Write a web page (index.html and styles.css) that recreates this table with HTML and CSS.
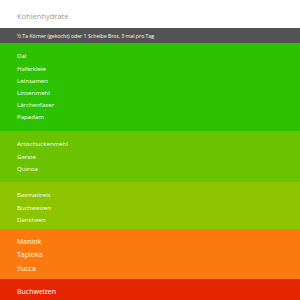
FILE: index.html
```html
<!DOCTYPE html>
<html lang="de">
<head>
<meta charset="utf-8">
<link rel="stylesheet" href="styles.css">
</head>
<body>
<header class="title">Kohlenhydrate</header>
<div class="note">½ Ta Körner (gekocht) oder 1 Scheibe Brot, 3 mal pro Tag</div>
<ul class="group g1">
  <li>Dal</li>
  <li>Haferkleie</li>
  <li>Leinsamen</li>
  <li>Linsenmehl</li>
  <li>Lärchenfaser</li>
  <li>Papadam</li>
</ul>
<ul class="group g2">
  <li>Artischuckenmehl</li>
  <li>Gerste</li>
  <li>Quinoa</li>
</ul>
<ul class="group g3">
  <li>Basmatireis</li>
  <li>Buchweizen</li>
  <li>Dansheen</li>
</ul>
<ul class="group g4">
  <li>Maniok</li>
  <li>Tapioka</li>
  <li>Yucca</li>
</ul>
<ul class="group g5">
  <li>Buchweizen</li>
</ul>
</body>
</html>
```
FILE: styles.css
```css
html, body {
  margin: 0;
  padding: 0;
  background: #e52400;
  font-family: "Open Sans", "Noto Sans", sans-serif;
}
body {
  height: 300px;
  overflow: hidden;
}
.title {
  height: 28px;
  box-sizing: border-box;
  padding: 4px 0 0 17px;
  display: flex;
  align-items: center;
  background: #ffffff;
  color: #999999;
  font-size: 7.5px;
}
.note {
  height: 15px;
  display: flex;
  align-items: center;
  padding-left: 17px;
  background: #535353;
  color: #ffffff;
  font-size: 5.2px;
}
.group {
  list-style: none;
  margin: 0;
  padding: 7.4px 0 7.4px 17px;
  color: #ffffff;
  font-size: 6.1px;
  line-height: 12.2px;
}
.g1 { background: #2dc200; height: 88px; box-sizing: border-box; }
.g2 { background: #6bc300; height: 51px; box-sizing: border-box; }
.g3 { background: #8cc500; height: 47px; box-sizing: border-box; }
.g4 {
  background: #fb7a10;
  height: 50px;
  box-sizing: border-box;
  padding-top: 5.8px;
  font-size: 7px;
  line-height: 13.6px;
}
.g5 {
  background: #e52400;
  padding-top: 5.8px;
  font-size: 7px;
  line-height: 13.6px;
}
```
